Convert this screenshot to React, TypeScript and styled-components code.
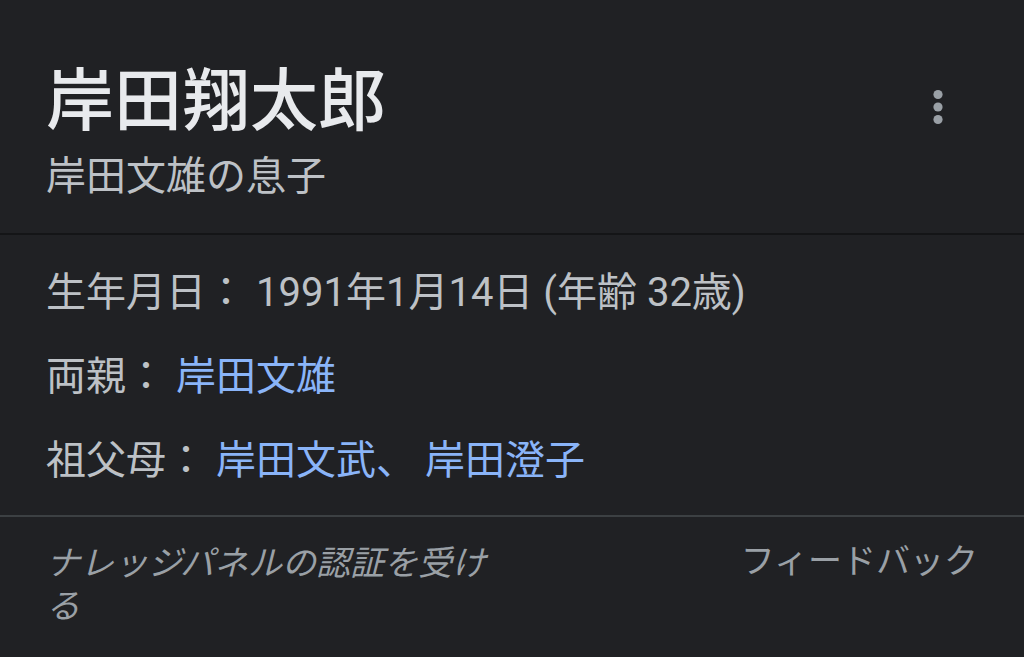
import { FC } from "react";
import styled, { createGlobalStyle } from "styled-components";

const GlobalStyle = createGlobalStyle`
  html, body {
    margin: 0;
    padding: 0;
    background: #202124;
  }
  body {
    font-family: Roboto, "Noto Sans CJK JP", sans-serif;
  }
`;

interface Fact {
  label: string;
  value: string[];
  link?: boolean;
}

const facts: Fact[] = [
  { label: "生年月日", value: ["1991年1月14日 (年齢 32歳)"] },
  { label: "両親", value: ["岸田文雄"], link: true },
  { label: "祖父母", value: ["岸田文武", "岸田澄子"], link: true },
];

const App: FC = () => {
  return (
    <Panel>
      <GlobalStyle />
      <Header>
        <TitleBlock>
          <Title>岸田翔太郎</Title>
          <Subtitle>岸田文雄の息子</Subtitle>
        </TitleBlock>
        <MoreButton aria-label="more">
          <svg width="12" height="36" viewBox="0 0 12 36">
            <circle cx="6" cy="5.5" r="4.6" fill="#9aa0a6" />
            <circle cx="6" cy="18" r="4.6" fill="#9aa0a6" />
            <circle cx="6" cy="30.5" r="4.6" fill="#9aa0a6" />
          </svg>
        </MoreButton>
      </Header>
      <Facts>
        {facts.map((f) => (
          <Row key={f.label}>
            <Label>{f.label}：</Label>
            {f.value.map((v, i) => (
              <span key={v}>
                <Value link={!!f.link}>{v}</Value>
                {i < f.value.length - 1 && <Sep>、</Sep>}
              </span>
            ))}
          </Row>
        ))}
      </Facts>
      <Footer>
        <Claim>ナレッジパネルの認証を受ける</Claim>
        <Feedback>フィードバック</Feedback>
      </Footer>
    </Panel>
  );
};

export default App;

const Panel = styled.div({
  width: "1024px",
  height: "657px",
  background: "#202124",
  overflow: "hidden",
});
const Header = styled.div({
  height: "235px",
  boxSizing: "border-box",
  padding: "57px 46px 0 46px",
  display: "flex",
  justifyContent: "space-between",
  alignItems: "flex-start",
  borderBottom: "2px solid #141517",
});
const TitleBlock = styled.div({
  display: "flex",
  flexDirection: "column",
});
const Title = styled.div({
  fontSize: "68px",
  lineHeight: "90px",
  fontWeight: 500,
  color: "#e8eaed",
});
const Subtitle = styled.div({
  fontSize: "40px",
  lineHeight: "52px",
  color: "#bdc1c6",
  marginTop: "4px",
});
const MoreButton = styled.div({
  marginTop: "32px",
  marginRight: "34px",
  display: "flex",
});
const Facts = styled.div({
  height: "282px",
  boxSizing: "border-box",
  padding: "16px 46px 0 46px",
  display: "flex",
  flexDirection: "column",
  borderBottom: "2px solid #3c4043",
});
const Row = styled.div({
  fontSize: "40px",
  lineHeight: "84px",
  color: "#bdc1c6",
  whiteSpace: "nowrap",
});
const Label = styled.span({
  color: "#bdc1c6",
  marginRight: "10px",
});
const Value = styled.span<{ link: boolean }>(({ link }) => ({
  color: link ? "#8ab4f8" : "#bdc1c6",
}));
const Sep = styled.span({
  color: "#8ab4f8",
  marginRight: "9px",
});
const Footer = styled.div({
  display: "flex",
  justifyContent: "space-between",
  alignItems: "flex-start",
  padding: "25px 46px 0 46px",
});
const Claim = styled.div({
  width: "470px",
  fontSize: "34px",
  lineHeight: "43px",
  fontStyle: "italic",
  color: "#9aa0a6",
});
const Feedback = styled.div({
  fontSize: "34px",
  lineHeight: "43px",
  color: "#9aa0a6",
  marginTop: "-2px",
});
